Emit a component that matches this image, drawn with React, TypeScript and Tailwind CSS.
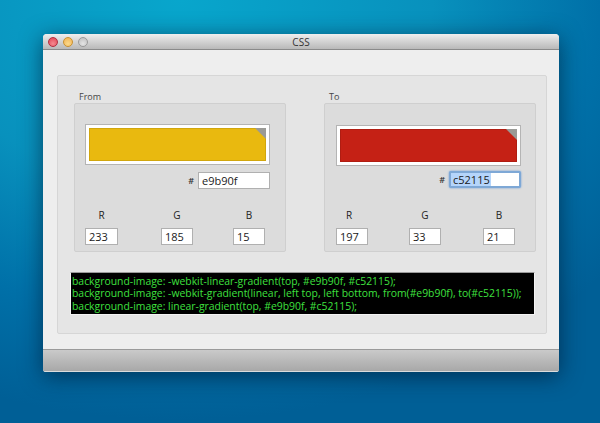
const sans = "font-['Open_Sans',sans-serif]"

function Field({ value, className, focused }: { value: string; className: string; focused?: boolean }) {
  if (focused) {
    return (
      <div className={`flex h-[17px] items-stretch rounded-[2px] border-2 border-[#7ea8d6] bg-white text-[11px] leading-none text-[#1a1a1a] shadow-[0_0_2px_#5f96d8] ${className}`}>
        <span className="flex items-center bg-[#b5d5fb] pl-[2px] pr-px">{value}</span>
      </div>
    )
  }
  return (
    <div className={`flex h-[17px] items-center border border-[#b0b0b0] bg-white pl-[3px] text-[11px] leading-none text-[#1a1a1a] ${className}`}>
      {value}
    </div>
  )
}

function Channel({ label, value, className, labelClass }: { label: string; value: string; className: string; labelClass?: string }) {
  return (
    <div className={`flex flex-col items-center ${className}`}>
      <span className={`mb-[7px] text-[10px] leading-[12px] text-[#222] ${labelClass ?? ""}`}>{label}</span>
      <Field value={value} className="w-full" />
    </div>
  )
}

function ColorPanel(props: {
  title: string
  color: string
  hex: string
  rgb: string[]
  focused?: boolean
  panelClass: string
  padding: string
  swatchTop: string
  swatchGap: string
  channelTop: string
  widths: string[]
  channelGap: string[]
  redLabel?: string
}) {
  return (
    <div className={`flex w-[212px] flex-col ${props.panelClass}`}>
      <span className="h-[13px] pl-[5px] text-[9px] leading-[13px] text-[#444]">{props.title}</span>
      <div className={`flex h-[149px] flex-col rounded-[2px] border border-[#cfcfcf] bg-[#dcdcdc] ${props.padding}`}>
        <div className={`flex h-[41px] w-[185px] items-stretch border border-[#b4b4b4] bg-white p-[3px] ${props.swatchTop}`}>
          <div className="relative flex-1 border border-black/10" style={{ backgroundColor: props.color }}>
            <svg className="absolute -right-px -top-px" width="11" height="11" viewBox="0 0 11 11">
              <polygon points="0,0 11,0 11,11" fill="#9a9a96" />
            </svg>
          </div>
        </div>
        <div className={`flex w-[185px] items-center justify-end ${props.swatchGap}`}>
          <span className="mr-[4px] text-[9px] font-semibold leading-none text-[#333]">#</span>
          <Field value={props.hex} focused={props.focused} className="w-[72px]" />
        </div>
        <div className={`flex ${props.channelTop}`}>
          <Channel label="R" value={props.rgb[0]} labelClass={props.redLabel} className={`${props.widths[0]} ${props.channelGap[0]}`} />
          <Channel label="G" value={props.rgb[1]} className={`${props.widths[1]} ${props.channelGap[1]}`} />
          <Channel label="B" value={props.rgb[2]} className={props.widths[2]} />
        </div>
      </div>
    </div>
  )
}

export default function App() {
  return (
    <div className={`flex h-[423px] w-[600px] items-start overflow-hidden bg-[radial-gradient(ellipse_560px_420px_at_30%_0%,#08a6cc_0%,#0891bd_45%,#0070a8_75%,#005f96_100%)] pl-[43px] pt-[34px] ${sans}`}>
      <div className="flex h-[338px] w-[516px] flex-col overflow-hidden rounded-t-[4px] rounded-b-[3px] bg-[#eeeeee] shadow-[0_4px_22px_rgba(0,25,50,0.65)]">
        <div className="relative flex h-[16px] shrink-0 items-center justify-center border-b border-[#8a8a8a] bg-gradient-to-b from-[#eeeeee] to-[#b9b9b9]">
          <div className="absolute left-[5px] top-[3px] flex gap-[5px]">
            <span className="h-[10px] w-[10px] rounded-full border border-[#b03040] bg-[radial-gradient(circle_at_50%_70%,#f58a90,#e0404f)]" />
            <span className="h-[10px] w-[10px] rounded-full border border-[#c89030] bg-[radial-gradient(circle_at_50%_70%,#fbd98a,#f0b050)]" />
            <span className="h-[10px] w-[10px] rounded-full border border-[#9a9a9a] bg-[radial-gradient(circle_at_50%_70%,#e4e4e4,#bcbcbc)]" />
          </div>
          <span className="text-[10px] leading-none text-[#333]">CSS</span>
        </div>

        <div className="flex min-h-0 flex-1 flex-col px-[14px] pt-[25px]">
          <div className="flex h-[259px] w-[490px] flex-col rounded-[2px] border border-[#d6d6d6] bg-[#e5e5e5]">
            <div className="flex pt-[14px]">
              <ColorPanel
                title="From"
                color="#e9b90f"
                hex="e9b90f"
                rgb={["233", "185", "15"]}
                panelClass="ml-[16px]"
                padding="pl-[10px]"
                swatchTop="mt-[20px]"
                swatchGap="mt-[7px]"
                channelTop="mt-[20px]"
                widths={["w-[33px]", "w-[32px]", "w-[32px]"]}
                channelGap={["mr-[43px]", "mr-[40px]"]}
              />
              <ColorPanel
                title="To"
                color="#c52115"
                hex="c52115"
                rgb={["197", "33", "21"]}
                focused
                panelClass="ml-[38px]"
                padding="pl-[11px]"
                swatchTop="mt-[21px]"
                swatchGap="mt-[5px]"
                channelTop="mt-[21px]"
                widths={["w-[32px]", "w-[32px]", "w-[32px]"]}
                channelGap={["mr-[41px]", "mr-[42px]"]}
                redLabel="mr-[6px]"
              />
            </div>
            <div className="ml-[12px] mt-[20px] flex h-[43px] w-[465px] flex-col justify-center whitespace-nowrap border border-[#f4f4f4] border-t-[#9a9a9a] bg-black pl-[1px] text-[10.4px] leading-[12.5px] text-[#3fe03f]">
              <div>background-image: -webkit-linear-gradient(top, #e9b90f, #c52115);</div>
              <div>background-image: -webkit-gradient(linear, left top, left bottom, from(#e9b90f), to(#c52115));</div>
              <div>background-image: linear-gradient(top, #e9b90f, #c52115);</div>
            </div>
          </div>
        </div>

        <div className="h-[23px] shrink-0 border-b border-t border-b-[#dcdcdc] border-t-[#9a9a9a] bg-gradient-to-b from-[#cacaca] to-[#a8a8a8]" />
      </div>
    </div>
  )
}
